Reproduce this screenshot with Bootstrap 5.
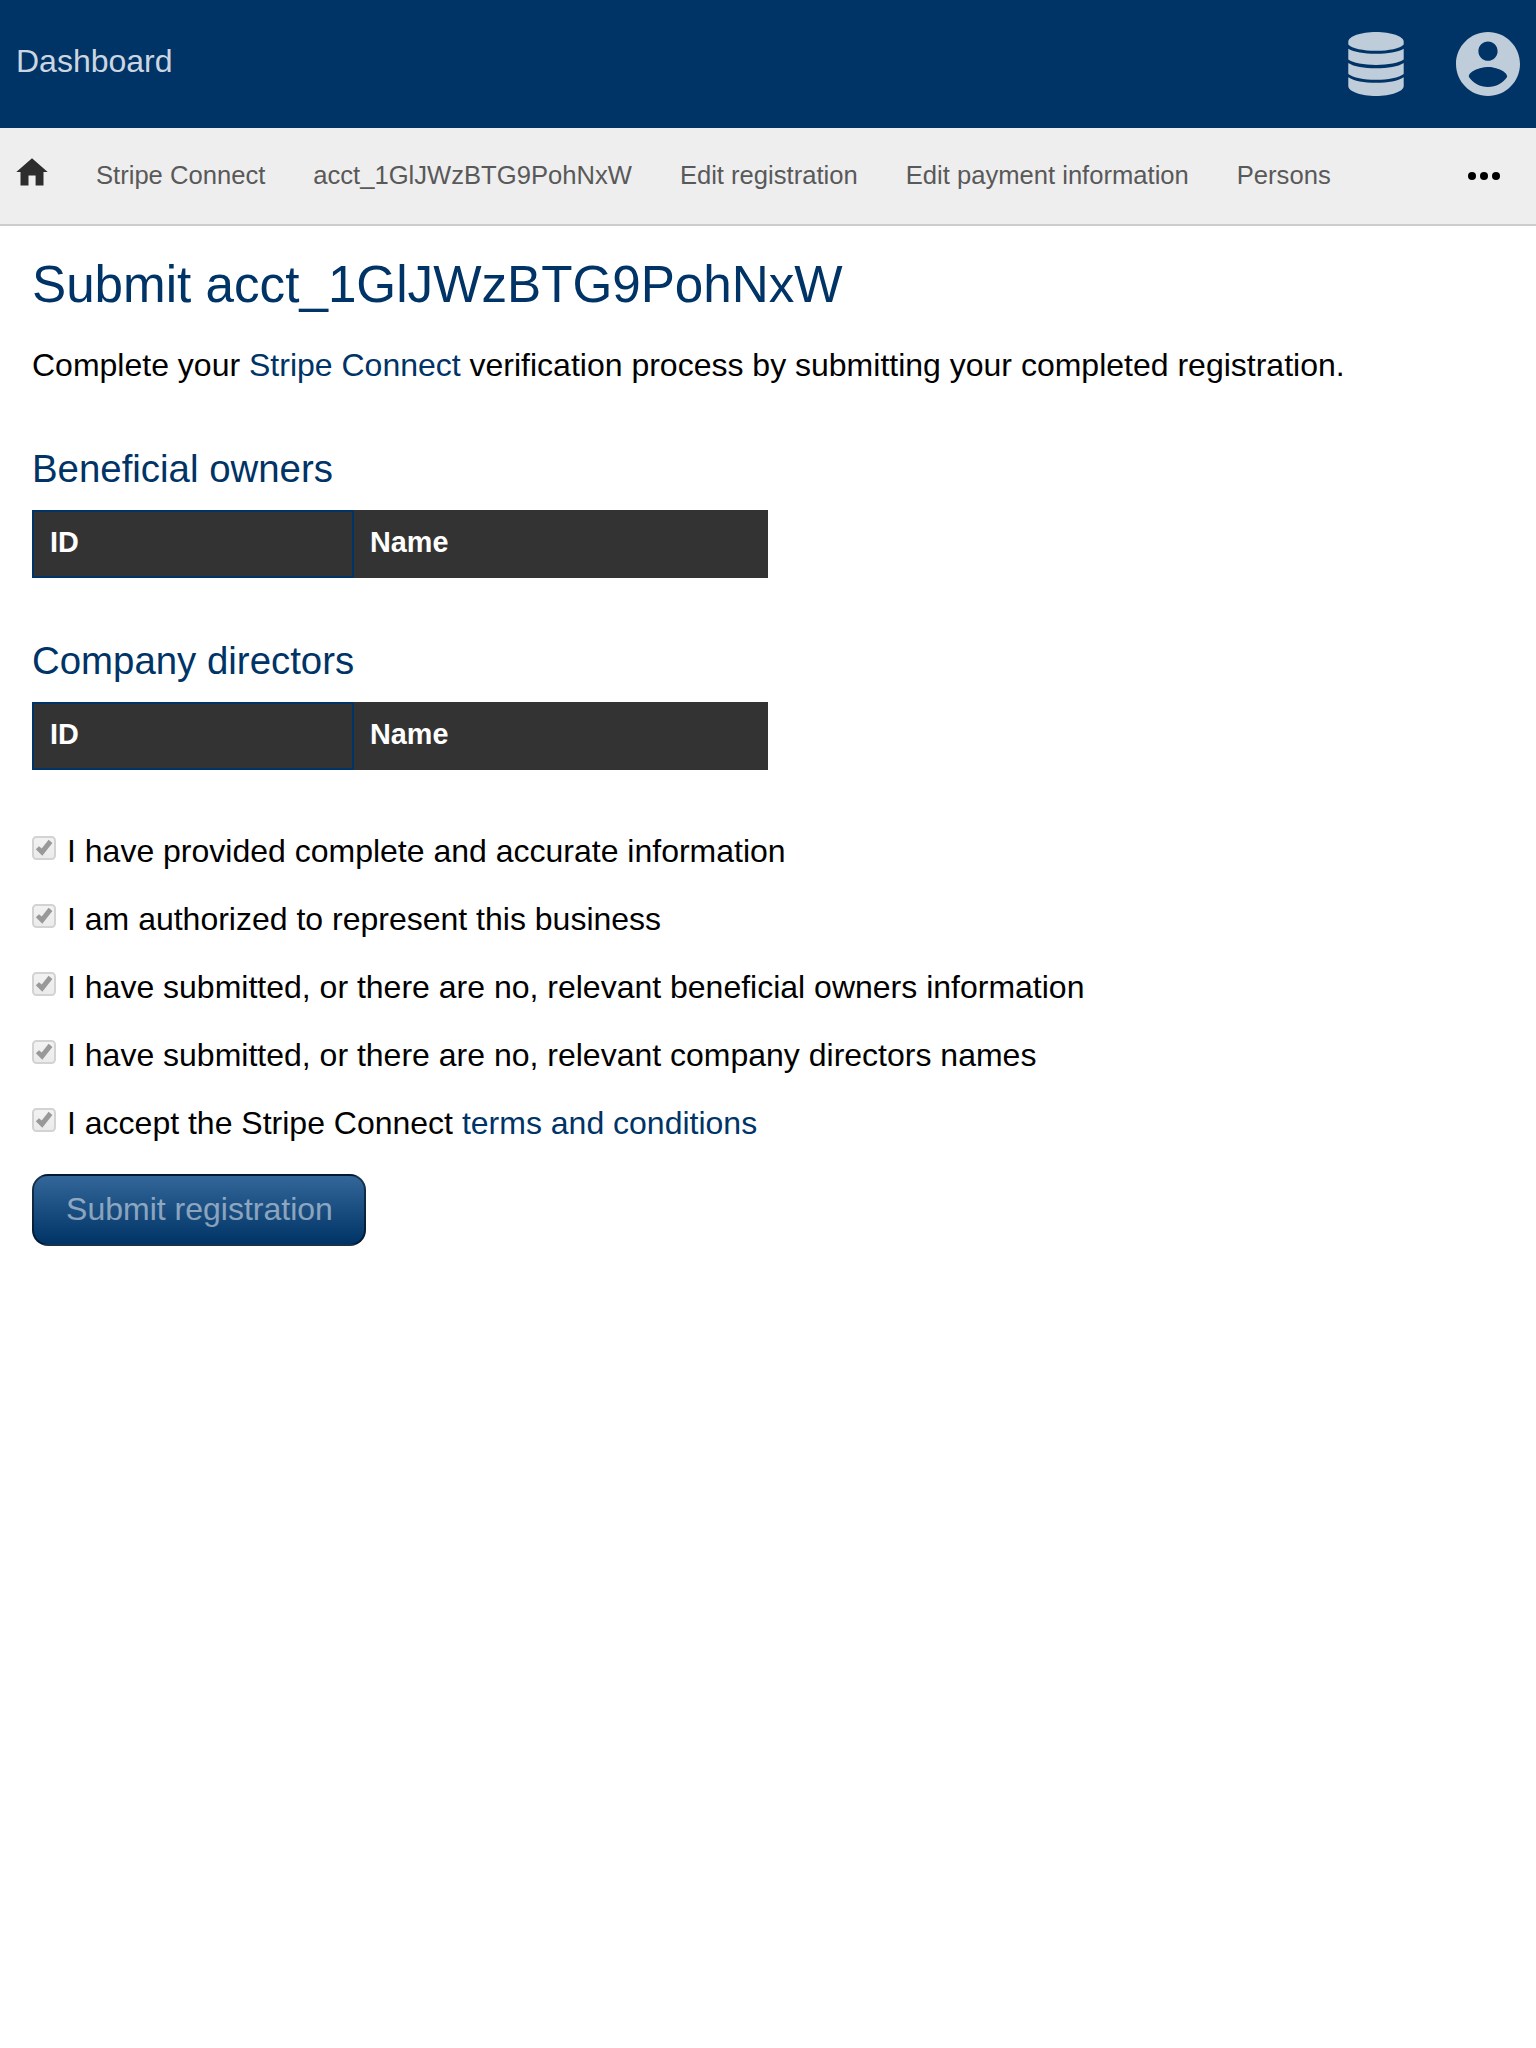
<!DOCTYPE html>
<html lang="en">
<head>
<meta charset="utf-8">
<meta name="viewport" content="width=device-width, initial-scale=1">
<title>Submit registration</title>
<link rel="stylesheet" href="https://cdn.jsdelivr.net/npm/bootstrap@5.3.0/dist/css/bootstrap.min.css">
<style>
  body { font-family: "Liberation Sans", Arial, sans-serif; font-size: 32px; line-height: 40px; color: #000; background: #fff; }
  a { color: #036; text-decoration: none; }
  .top-bar { height: 128px; background: #036; padding: 0 16px; }
  .top-bar .site-title { color: #ccd6e0; line-height: 122px; }
  .top-icons { gap: 52px; padding-top: 32px; }
  .top-icons svg, .menu-bar svg { display: block; }
  .menu-bar { height: 98px; background: #eee; border-bottom: 2px solid #ccc; padding: 0 36px 0 16px; font-size: 25.6px; }
  .menu-bar .nav { gap: 48px; }
  .menu-bar .nav-link { padding: 0 0 2px; color: #595959; line-height: 94px; }
  .page-body { padding: 29px 32px 0; }
  h1 { font-size: 51.2px; line-height: 60px; font-weight: 400; color: #036; margin: 0 0 30px; }
  h2 { font-size: 38.4px; line-height: 44px; font-weight: 400; color: #036; margin: 0 0 19px; }
  .intro { margin: 0 0 62px; }
  .people { width: 736px; height: 68px; margin-bottom: 61px; font-size: 28.8px; line-height: 34px; font-weight: 700; color: #fff; background: #333; }
  .people .id-cell { width: 322px; border: 2px solid #036; padding: 13px 16px; }
  .people .name-cell { padding: 15px 16px; }
  .check-row { height: 68px; line-height: 68px; gap: 11px; }
  .check-row svg { margin-top: 19px; }
  .checks { margin-top: -14px; }
  .btn-submit, .btn-submit:disabled { display: block; width: 334px; height: 72px; margin-top: 17px; padding: 0 0 2px 1px; font-size: 32px; line-height: 66px; color: rgba(255, 255, 255, .5); background: linear-gradient(#369, #036); border: 2px solid rgba(0, 0, 0, .5); border-radius: 16px; opacity: 1; }
</style>
<script src="https://cdn.jsdelivr.net/npm/bootstrap@5.3.0/dist/js/bootstrap.bundle.min.js"></script>
</head>
<body>
<svg width="0" height="0" class="position-absolute" aria-hidden="true">
  <defs>
    <linearGradient id="boxfill" x1="0" y1="0" x2="0" y2="1"><stop offset="0" stop-color="#f3f3f3"/><stop offset="1" stop-color="#ebebeb"/></linearGradient>
    <symbol id="tick" viewBox="0 0 24 24">
      <rect x="1" y="1" width="22" height="22" rx="3.5" fill="url(#boxfill)" stroke="#d3d3d3" stroke-width="2"/>
      <path d="M3.8 13.2 7 10.2 9.7 12.6 16.6 3.8 20.4 7 10.3 19.8Z" fill="#999"/>
    </symbol>
  </defs>
</svg>
<header class="top-bar d-flex justify-content-between align-items-start">
  <a class="site-title" href="#">Dashboard</a>
  <div class="top-icons d-flex">
    <svg width="56" height="64" viewBox="0 0 56 64" fill="#bfccd9">
      <path d="M28 0C43 0 55.7 4.3 55.7 9.8V12.5C52 16.5 41 18.8 28 18.8S4 16.5 .3 12.5V9.8C.3 4.3 13 0 28 0Z"/>
      <path d="M.3 16.7C6 20 16 21.7 28 21.7S50 20 55.7 16.7V27.6C51 31 40 33 28 33S5 31 .3 27.6Z"/>
      <path d="M.3 31C6 34.7 16 36.3 28 36.3S50 34.7 55.7 31V42C51 45.8 40 47.8 28 47.8S5 45.8 .3 42Z"/>
      <path d="M.3 45.2C6 49 16 50.8 28 50.8S50 49 55.7 45.2V54C55.7 59.5 43 64 28 64S.3 59.5 .3 54Z"/>
    </svg>
    <svg width="64" height="64" viewBox="2 2 20 20" fill="#bfccd9">
      <path d="M12 2C6.48 2 2 6.48 2 12s4.48 10 10 10 10-4.48 10-10S17.52 2 12 2zm0 3c1.66 0 3 1.34 3 3s-1.34 3-3 3-3-1.34-3-3 1.34-3 3-3zm0 14.2c-2.5 0-4.71-1.28-6-3.22.03-1.99 4-3.08 6-3.08s5.97 1.09 6 3.08c-1.29 1.94-3.5 3.22-6 3.22z"/>
    </svg>
  </div>
</header>
<div class="menu-bar d-flex justify-content-between align-items-center">
  <nav class="nav flex-nowrap align-items-center">
    <a href="#" aria-label="Home"><svg width="32" height="36" viewBox="0 0 32 36"><path d="M16 .2 31.7 14H27.5V27.6H19.6V17.6H12.5V27.6H4.5V14H.3Z" fill="#2d2d2d"/></svg></a>
    <a class="nav-link" href="#">Stripe Connect</a>
    <a class="nav-link" href="#">acct_1GlJWzBTG9PohNxW</a>
    <a class="nav-link" href="#">Edit registration</a>
    <a class="nav-link" href="#">Edit payment information</a>
    <a class="nav-link" href="#">Persons</a>
  </nav>
  <svg width="32" height="8" viewBox="0 0 32 8"><circle cx="4" cy="4" r="4"/><circle cx="16" cy="4" r="4"/><circle cx="28" cy="4" r="4"/></svg>
</div>
<main class="page-body">
  <h1>Submit acct_1GlJWzBTG9PohNxW</h1>
  <p class="intro">Complete your <a href="#">Stripe Connect</a> verification process by submitting your completed registration.</p>
  <h2>Beneficial owners</h2>
  <div class="people d-flex"><div class="id-cell">ID</div><div class="name-cell flex-grow-1">Name</div></div>
  <h2>Company directors</h2>
  <div class="people d-flex"><div class="id-cell">ID</div><div class="name-cell flex-grow-1">Name</div></div>
  <form class="checks">
    <div class="check-row d-flex"><svg width="24" height="24"><use href="#tick"/></svg><span>I have provided complete and accurate information</span></div>
    <div class="check-row d-flex"><svg width="24" height="24"><use href="#tick"/></svg><span>I am authorized to represent this business</span></div>
    <div class="check-row d-flex"><svg width="24" height="24"><use href="#tick"/></svg><span>I have submitted, or there are no, relevant beneficial owners information</span></div>
    <div class="check-row d-flex"><svg width="24" height="24"><use href="#tick"/></svg><span>I have submitted, or there are no, relevant company directors names</span></div>
    <div class="check-row d-flex"><svg width="24" height="24"><use href="#tick"/></svg><span>I accept the Stripe Connect <a href="#">terms and conditions</a></span></div>
    <button type="button" class="btn btn-submit" disabled>Submit registration</button>
  </form>
</main>
</body>
</html>
